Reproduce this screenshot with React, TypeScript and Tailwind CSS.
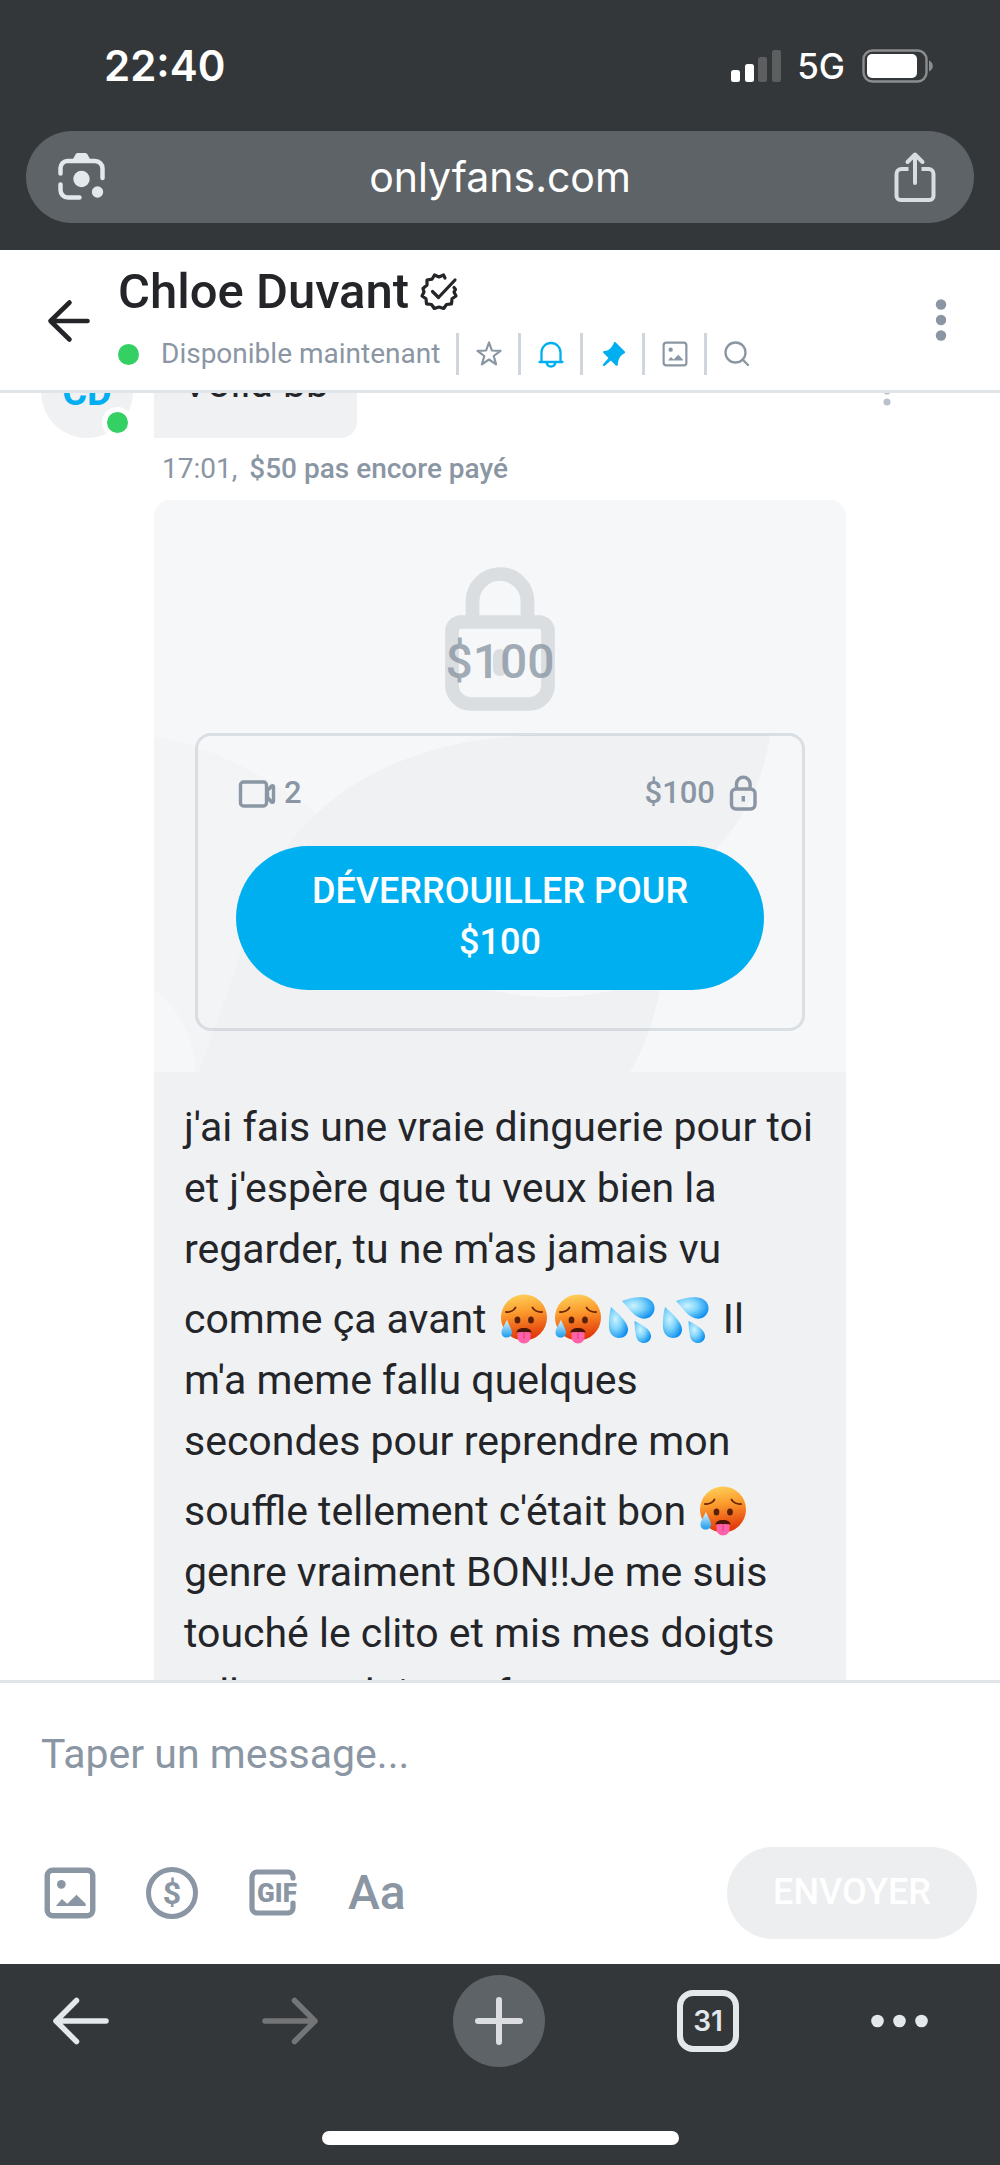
import React from "react";

const HotFace: React.FC = () => (
    <svg role="img" aria-label="🥵" viewBox="0 0 48 50" className="inline-block w-[48px] h-[50px] mt-[14px] mx-[3px] align-[-11px]">
        <defs>
            <linearGradient id="hot" x1="0" y1="0" x2="0.15" y2="1">
                <stop offset="0" stopColor="#fed65e" />
                <stop offset="0.45" stopColor="#fb9a2c" />
                <stop offset="1" stopColor="#e2380a" />
            </linearGradient>
            <linearGradient id="sweat" x1="0" y1="0" x2="0" y2="1">
                <stop offset="0" stopColor="#e4f7ff" />
                <stop offset="1" stopColor="#199ced" />
            </linearGradient>
        </defs>
        <circle cx="24" cy="23.500" r="23" fill="url(#hot)" />
        <path d="M6 18C10 18.500 14 16.500 15.500 13.500M42 18c-4 .5-8-1.500-9.500-4.500" fill="none" stroke="#6b2407" strokeWidth="1.800" strokeLinecap="round" />
        <ellipse cx="17.500" cy="26" rx="2.900" ry="3.600" fill="#5b2008" />
        <ellipse cx="31" cy="26" rx="2.900" ry="3.600" fill="#5b2008" />
        <path d="M16.500 38.500c0-2.500 3-4.500 7.500-4.500s7.500 2 7.500 4.500z" fill="#4a1505" />
        <path d="M17.500 38.500c2-.8 11-.8 13 0V43c0 3.500-2.500 6.500-6.500 6.500s-6.500-3-6.500-6.500z" fill="#ff62a8" />
        <path d="M24 38v7" stroke="#e0408a" strokeWidth="1.200" />
        <path d="M7 25.500c1 4.500 5 9 5 13 0 3-2.300 5-5.300 5S1.500 41.500 1.500 38.500c0-4 4-8.500 5.500-13z" fill="url(#sweat)" />
    </svg>
)

const Drops: React.FC = () => (
    <svg role="img" aria-label="💦" viewBox="0 0 48 50" className="inline-block w-[48px] h-[50px] mt-[14px] mx-[3px] align-[-11px]">
        <defs>
            <radialGradient id="drop" cx="0.35" cy="0.4" r="0.7">
                <stop offset="0" stopColor="#cdf3ff" />
                <stop offset="0.45" stopColor="#7fd4fb" />
                <stop offset="1" stopColor="#0c8eee" />
            </radialGradient>
        </defs>
        <path d="M14 7C21 4 30 2.500 36 3.500c7 1 11 6 10.500 11.500-.6 6.500-6 10.500-12.500 9.500C26 23 20 13 14 7z" fill="url(#drop)" />
        <path d="M3 13c7 6 17 15 17 22.500 0 5-4 8.500-9 8.500S1.500 40 1 33.500C.5 27 1.500 19 3 13z" fill="url(#drop)" />
        <path d="M26.500 27C33 30.500 43 35 43 42c0 4-3 7-7 7s-7-2.500-8-7c-1-5-1.500-10-1.500-15z" fill="url(#drop)" />
    </svg>
)

const ImageIcon: React.FC<{ className: string, stroke: number }> = ({ className, stroke }) => (
    <svg viewBox="0 0 48 48" className={className}>
        <rect x="3" y="3" width="42" height="42" rx="5" fill="none" stroke="currentColor" strokeWidth={stroke} />
        <circle cx="16" cy="16" r="4" fill="currentColor" />
        <path d="M11 36l5.500-6.500 5 4.500 8.500-8.500 8.500 8.500V36z" fill="currentColor" />
    </svg>
)

type Tool = {
    id: number
    label: string
    color: string
    icon: React.ReactNode
}

const tools: Tool[] = [
    {
        id: 1, label: 'Favoris', color: 'text-[#8a96a3]', icon: (
            <svg viewBox="0 0 28 28" className="w-7 h-7" fill="none" stroke="currentColor" strokeWidth="2.200" strokeLinejoin="round">
                <path d="M14 2.500l2.900 8 8.600.3-6.800 5.200 2.400 8.300L14 19.500l-7.100 4.800L9.300 16 2.500 10.800l8.600-.3z" />
            </svg>
        )
    },
    {
        id: 2, label: 'Notifications', color: 'text-[#00aff0]', icon: (
            <svg viewBox="0 0 28 28" className="w-7 h-7" fill="none" stroke="currentColor" strokeWidth="2.300" strokeLinecap="round" strokeLinejoin="round">
                <path d="M2.500 22h23M4.500 22v-9.500a9.500 9.500 0 0 1 19 0V22M9.500 22.500c.6 2.700 2.300 4 4.500 4s3.900-1.300 4.500-4" />
            </svg>
        )
    },
    {
        id: 3, label: 'Épingler', color: 'text-[#00aff0]', icon: (
            <svg viewBox="0 0 28 28" className="w-7 h-7" fill="currentColor">
                <path d="M15 2.500c.6-.6 1.200-.6 1.800 0l9 9c.6.6.5 1.200-.2 1.700-4 2-6.300 4.700-6.800 11.500-.2 1.200-1.200 1.500-2 .7l-5-5-6 5.300c-1.200 1-2.600-.4-1.600-1.600l5.300-6-5-5c-.8-.8-.5-1.800.7-2C11 10.500 13 7 15 2.500z" />
            </svg>
        )
    },
    { id: 4, label: 'Galerie', color: 'text-[#8a96a3]', icon: <ImageIcon className="w-[26px] h-[26px]" stroke={4} /> },
    {
        id: 5, label: 'Rechercher', color: 'text-[#8a96a3]', icon: (
            <svg viewBox="0 0 28 28" className="w-7 h-7" fill="none" stroke="currentColor" strokeWidth="2.300" strokeLinecap="round">
                <circle cx="12.500" cy="12.500" r="10" />
                <path d="M19.500 19.500l5.500 5.500" />
            </svg>
        )
    },
]

const BrowserTop: React.FC = () => (
    <div className="shrink-0 bg-[#33373a] text-white px-[26px] pb-[27px] font-['Inter',sans-serif]">
        {/* status bar */}
        <div className="h-[131px] flex justify-between items-center pl-[78px] pr-[40px]">
            <time className="text-[42px] leading-[52px] font-semibold">22:40</time>
            <div className="flex items-center">
                <svg viewBox="0 0 50 32" className="w-[50px] h-[32px]">
                    <rect x="0" y="20" width="9" height="12" rx="2.500" fill="#fff" />
                    <rect x="14" y="14" width="9" height="18" rx="2.500" fill="#fff" />
                    <rect x="27" y="7" width="9" height="25" rx="2.500" fill="#5d5e60" />
                    <rect x="41" y="0" width="9" height="32" rx="2.500" fill="#5d5e60" />
                </svg>
                <span className="ml-4 text-[35px] leading-[42px] font-medium">5G</span>
                <svg viewBox="0 0 72 34" className="w-[72px] h-[34px] ml-[17px]">
                    <rect x="1.500" y="1.500" width="63" height="31" rx="9" fill="none" stroke="#8c8d8f" strokeWidth="2.400" />
                    <rect x="5" y="5" width="50" height="24" rx="5" fill="#fff" />
                    <path d="M67 11.500c5 2 5 9 0 11z" fill="#8c8d8f" />
                </svg>
            </div>
        </div>
        {/* url bar */}
        <div className="h-[92px] rounded-full bg-[#5e6367] flex justify-between items-center px-8">
            <button aria-label="Recherche visuelle">
                <svg viewBox="0 0 48 48" className="w-12 h-12" fill="none" stroke="#e3e8eb" strokeWidth="4.500" strokeLinecap="round">
                    <path d="M2.500 20.500V15A7 7 0 0 1 9.500 8H37a7.500 7.500 0 0 1 7.500 7.500V25M2.500 31.500V37A7.500 7.500 0 0 0 10 44.500h11.500" />
                    <path d="M14 8l3.500-6.500c.6-1 1.500-1.500 2.500-1.500h7c1 0 1.900.5 2.500 1.500L33 8z" fill="#e3e8eb" stroke="none" />
                    <circle cx="23.500" cy="26" r="8.200" fill="#e3e8eb" stroke="none" />
                    <circle cx="39.500" cy="39" r="5.700" fill="#e3e8eb" stroke="none" />
                </svg>
            </button>
            <span className="text-[41px] leading-[50px]">onlyfans.com</span>
            <button aria-label="Partager">
                <svg viewBox="0 0 48 52" className="w-[48px] h-[52px]" fill="none" stroke="#d9dce1" strokeWidth="4" strokeLinecap="round" strokeLinejoin="round">
                    <path d="M14.500 18H7.500a5 5 0 0 0-5 5v22a4 4 0 0 0 4 4h29a4 4 0 0 0 4-4V23a5 5 0 0 0-5-5H27.500" strokeLinecap="butt" />
                    <path d="M21 32V4M13.500 11L21 3.500l7.500 7.500" />
                </svg>
            </button>
        </div>
    </div>
)

const ChatHeader: React.FC = () => (
    <header className="shrink-0 flex items-center border-b-[3px] border-[#e1e5ea] bg-white pl-[46px] pr-[49px]">
        <button aria-label="Retour">
            <svg viewBox="0 0 46 46" className="w-[46px] h-[46px]" fill="none" stroke="#242529" strokeWidth="4.600" strokeLinecap="round" strokeLinejoin="round">
                <path d="M41.500 24H4.500M23.500 5.500L4.500 24l19 18.500" />
            </svg>
        </button>
        <div className="flex-1 ml-[26px] pt-3 pb-[15px]">
            <div className="flex items-center">
                <h1 className="text-[49px] leading-[60px] font-medium text-[#242529]">Chloe Duvant</h1>
                <svg viewBox="0 0 40 40" className="w-10 h-10 ml-[10px]" fill="none" stroke="#242529" strokeWidth="3.200" strokeLinecap="round" strokeLinejoin="round">
                    <path d="M26 6l-1.500-3-4.500 2-4.500-2-2.500 4.200-5 .8v5L4 16.500 5 20l-2 4 4 2.800.5 5 5 .7 2.800 4L20 35l4.700 1.500 2.800-4 5-.7.500-5 4-2.800-2-4 1.500-2.500-1.500-2" />
                    <path d="M13.500 19.500l6 6L36 8" />
                </svg>
            </div>
            <div className="flex items-center mt-[11px] h-[42px]">
                <span className="w-[21px] h-[21px] rounded-full bg-[#35d063]"></span>
                <span className="ml-[22px] mr-4 text-[28px] leading-[42px] text-[#8a96a3]">Disponible maintenant</span>
                {
                    tools.map((tool) => (
                        <button key={tool.id} aria-label={tool.label} className={`w-[62px] h-[42px] flex justify-center items-center border-l-[3px] border-[#d0d6dc] ${tool.color}`}>
                            {tool.icon}
                        </button>
                    ))
                }
            </div>
        </div>
        <button aria-label="Plus d'options">
            <svg viewBox="0 0 20 44" className="w-5 h-11" fill="#8a96a3">
                <circle cx="10" cy="6.500" r="5.200" />
                <circle cx="10" cy="22" r="5.200" />
                <circle cx="10" cy="37.500" r="5.200" />
            </svg>
        </button>
    </header>
)

const LockedMedia: React.FC = () => (
    <div className="relative overflow-hidden rounded-t-[16px] bg-[#f5f7f9] pb-[41px]">
        {/* faded brand shapes */}
        <svg viewBox="0 0 692 573" preserveAspectRatio="none" className="absolute inset-0 w-full h-full">
            <path d="M0 237C60 247 120 280 165 316V573H0z" fill="#f2f4f6" />
            <path d="M0 490C28 510 41 545 41 573H0z" fill="#f5f7f9" />
            <path d="M45 573C58 535 72 500 86 455 115 320 220 235 400 235H616C610 280 590 320 564 347 530 390 520 440 506 491 500 520 490 550 476 573z" fill="#f0f1f3" />
            <ellipse cx="399" cy="438" rx="130" ry="60" fill="#f5f7f9" />
        </svg>
        <div className="relative flex justify-center items-end pt-[67px]">
            <svg viewBox="0 0 110 144" className="w-[110px] h-[144px]" fill="none" stroke="#dadee1" strokeWidth="13.700">
                <path d="M27.500 50V34.500a27.500 27.500 0 0 1 55 0V50" />
                <path d="M16 55H94a9 9 0 0 1 9 9V118a19 19 0 0 1-19 19H26A19 19 0 0 1 7 118V64a9 9 0 0 1 9-9z" />
                <rect x="48" y="82" width="14" height="27" rx="7" fill="#dadee1" stroke="none" />
            </svg>
            <span className="absolute bottom-[21px] text-[48px] leading-[56px] font-medium text-[#8a96a3]/80">$100</span>
        </div>
        <div className="relative mt-[22px] mx-[41px] px-[38px] pt-[37px] pb-[38px] border-[3px] border-[#8a96a3]/25 rounded-[16px]">
            <div className="flex justify-between items-center h-10 text-[31px] leading-10 font-medium text-[#8a96a3]">
                <div className="flex items-center">
                    <svg viewBox="0 0 42 40" className="w-[42px] h-10" fill="none" stroke="currentColor" strokeWidth="3.400" strokeLinejoin="round">
                        <rect x="4.500" y="9" width="26" height="24" rx="3" />
                        <path d="M31.500 17.500l4-4.500q2-1 2 1v14q0 2-2 1l-4-4.500z" />
                    </svg>
                    <span className="ml-[6px]">2</span>
                </div>
                <div className="flex items-center gap-[10px] pr-[3px]">
                    <span>$100</span>
                    <svg viewBox="0 0 36 40" className="w-9 h-10" fill="none" stroke="currentColor" strokeWidth="3.400">
                        <path d="M11.500 16v-5a6.800 6.800 0 0 1 13.600 0v5" />
                        <rect x="6.500" y="16" width="23.500" height="20" rx="4.500" />
                        <path d="M18.300 23v5.500" />
                    </svg>
                </div>
            </div>
            <button className="w-full mt-[33px] px-[60px] pt-5 pb-[22px] rounded-[72px] bg-[#00aff0] text-white text-[36px] leading-[51px] font-medium uppercase">
                Déverrouiller pour $100
            </button>
        </div>
    </div>
)

const Messages: React.FC = () => (
    <main className="flex-1 min-h-0 overflow-hidden">
        <div className="-mt-[71px]">
            <div className="flex items-end pl-[41px] pr-[103px]">
                <div className="relative w-[92px] h-[92px] rounded-full bg-[#f0f1f3] flex justify-center items-center text-[38px] leading-[44px] font-bold text-[#00aff0]">
                    CD
                    <span className="absolute right-0 bottom-0 w-[31px] h-[31px] rounded-full border-[5px] border-white bg-[#35d063]"></span>
                </div>
                <p className="ml-[21px] px-[28px] pt-[31px] pb-6 rounded-[16px] rounded-bl-none bg-[#f0f1f3] text-[41px] leading-[61px] text-[#242529]">Voila bb</p>
                <button aria-label="Options du message" className="ml-auto mb-[32px]">
                    <svg viewBox="0 0 20 28" className="w-5 h-7" fill="#b9c0c9">
                        <circle cx="10" cy="2" r="3.500" />
                        <circle cx="10" cy="13" r="3.500" />
                        <circle cx="10" cy="24" r="3.500" />
                    </svg>
                </button>
            </div>
            <div className="mx-[154px]">
                <div className="my-[10px] ml-2 text-[28px] leading-[42px] text-[#8a96a3]">
                    <time>17:01,</time>
                    <span className="ml-3 font-medium">$50 pas encore payé</span>
                </div>
                <LockedMedia />
                <p className="bg-[#f0f1f3] px-[30px] py-[25px] text-[41px] leading-[61px] text-[#242529]">
                    j'ai fais une vraie dinguerie pour toi et j'espère que tu veux bien la regarder, tu ne m'as jamais vu comme ça avant <HotFace /><HotFace /><Drops /><Drops /> Il m'a meme fallu quelques secondes pour reprendre mon souffle tellement c'était bon <HotFace /> genre vraiment BON!!Je me suis touché le clito et mis mes doigts tellement loin au fur et mesure
                </p>
            </div>
        </div>
    </main>
)

const Composer: React.FC = () => (
    <form className="shrink-0 border-t-[3px] border-[#e1e5ea] bg-white pb-[25px]">
        <input type="text" aria-label="Message" placeholder="Taper un message..." className="block w-full h-[141px] px-[41px] text-[41px] text-[#242529] placeholder:text-[#8a96a3] outline-none" />
        <div className="mt-[23px] flex justify-between items-center pl-[44px] pr-[23px] text-[#8a96a3]">
            <div className="flex items-center gap-[50px]">
                <button type="button" aria-label="Ajouter une image">
                    <ImageIcon className="w-[52px] h-[52px]" stroke={5} />
                </button>
                <button type="button" aria-label="Prix" className="w-[52px] h-[52px] rounded-full border-[5px] border-[#8a96a3] text-[32px] leading-[42px] font-bold">$</button>
                <button type="button" className="relative w-[50px] h-[48px] pl-[8px] text-[26px] leading-[48px] font-black">
                    <svg viewBox="0 0 50 48" className="absolute inset-0 w-[50px] h-12" fill="none" stroke="currentColor" strokeWidth="5.200" strokeLinecap="round">
                        <path d="M45 9V8a5 5 0 0 0-5-5H9a5 5 0 0 0-5 5v31a5 5 0 0 0 5 5h31a5 5 0 0 0 5-5v-5" />
                    </svg>
                    <span className="relative">GIF</span>
                </button>
                <button type="button" className="text-[48px] leading-[60px] font-medium">Aa</button>
            </div>
            <button type="submit" className="h-[92px] px-[46px] pb-[2px] rounded-full bg-[#edeef0] text-[36px] font-medium text-white">ENVOYER</button>
        </div>
    </form>
)

const BrowserBottom: React.FC = () => (
    <nav className="shrink-0 bg-[#33373a] pt-[11px] pb-5 font-['Inter',sans-serif]">
        <div className="flex justify-between items-center pl-[35px] pr-[72px]">
            <button aria-label="Page précédente" className="w-[92px] h-[92px] flex justify-center items-center">
                <svg viewBox="0 0 58 50" className="w-[58px] h-[50px]" fill="none" stroke="#e3e8eb" strokeWidth="5.500" strokeLinecap="round" strokeLinejoin="round">
                    <path d="M54 25H4M24.500 4.500L4 25l20.500 20.500" />
                </svg>
            </button>
            <button aria-label="Page suivante" className="w-[92px] h-[92px] flex justify-center items-center">
                <svg viewBox="0 0 58 50" className="w-[58px] h-[50px]" fill="none" stroke="#747577" strokeWidth="5.500" strokeLinecap="round" strokeLinejoin="round">
                    <path d="M4 25h50M33.500 4.500L54 25 33.500 45.500" />
                </svg>
            </button>
            <button aria-label="Nouvel onglet" className="w-[92px] h-[92px] rounded-full bg-[#5e6367] flex justify-center items-center">
                <svg viewBox="0 0 50 50" className="w-[50px] h-[50px]" fill="none" stroke="#dcdde1" strokeWidth="6" strokeLinecap="round">
                    <path d="M25 4v42M4 25h42" />
                </svg>
            </button>
            <button className="w-[92px] h-[92px] flex justify-center items-center">
                <span className="w-[62px] h-[62px] rounded-[16px] border-[6px] border-[#e3e8eb] text-[#e3e8eb] text-[28px] leading-[50px] font-semibold">31</span>
            </button>
            <button aria-label="Menu">
                <svg viewBox="0 0 57 14" className="w-[57px] h-[14px]" fill="#e3e8eb">
                    <circle cx="6.500" cy="7" r="6.300" />
                    <circle cx="28.500" cy="7" r="6.300" />
                    <circle cx="50.500" cy="7" r="6.300" />
                </svg>
            </button>
        </div>
        <div className="mx-auto mt-[64px] w-[357px] h-[14px] rounded-full bg-white"></div>
    </nav>
)

const App: React.FC = () => {
    return (
        <div className="h-screen flex flex-col bg-white font-['Roboto',sans-serif]">
            <BrowserTop />
            <ChatHeader />
            <Messages />
            <Composer />
            <BrowserBottom />
        </div>
    )
}

export default App;
